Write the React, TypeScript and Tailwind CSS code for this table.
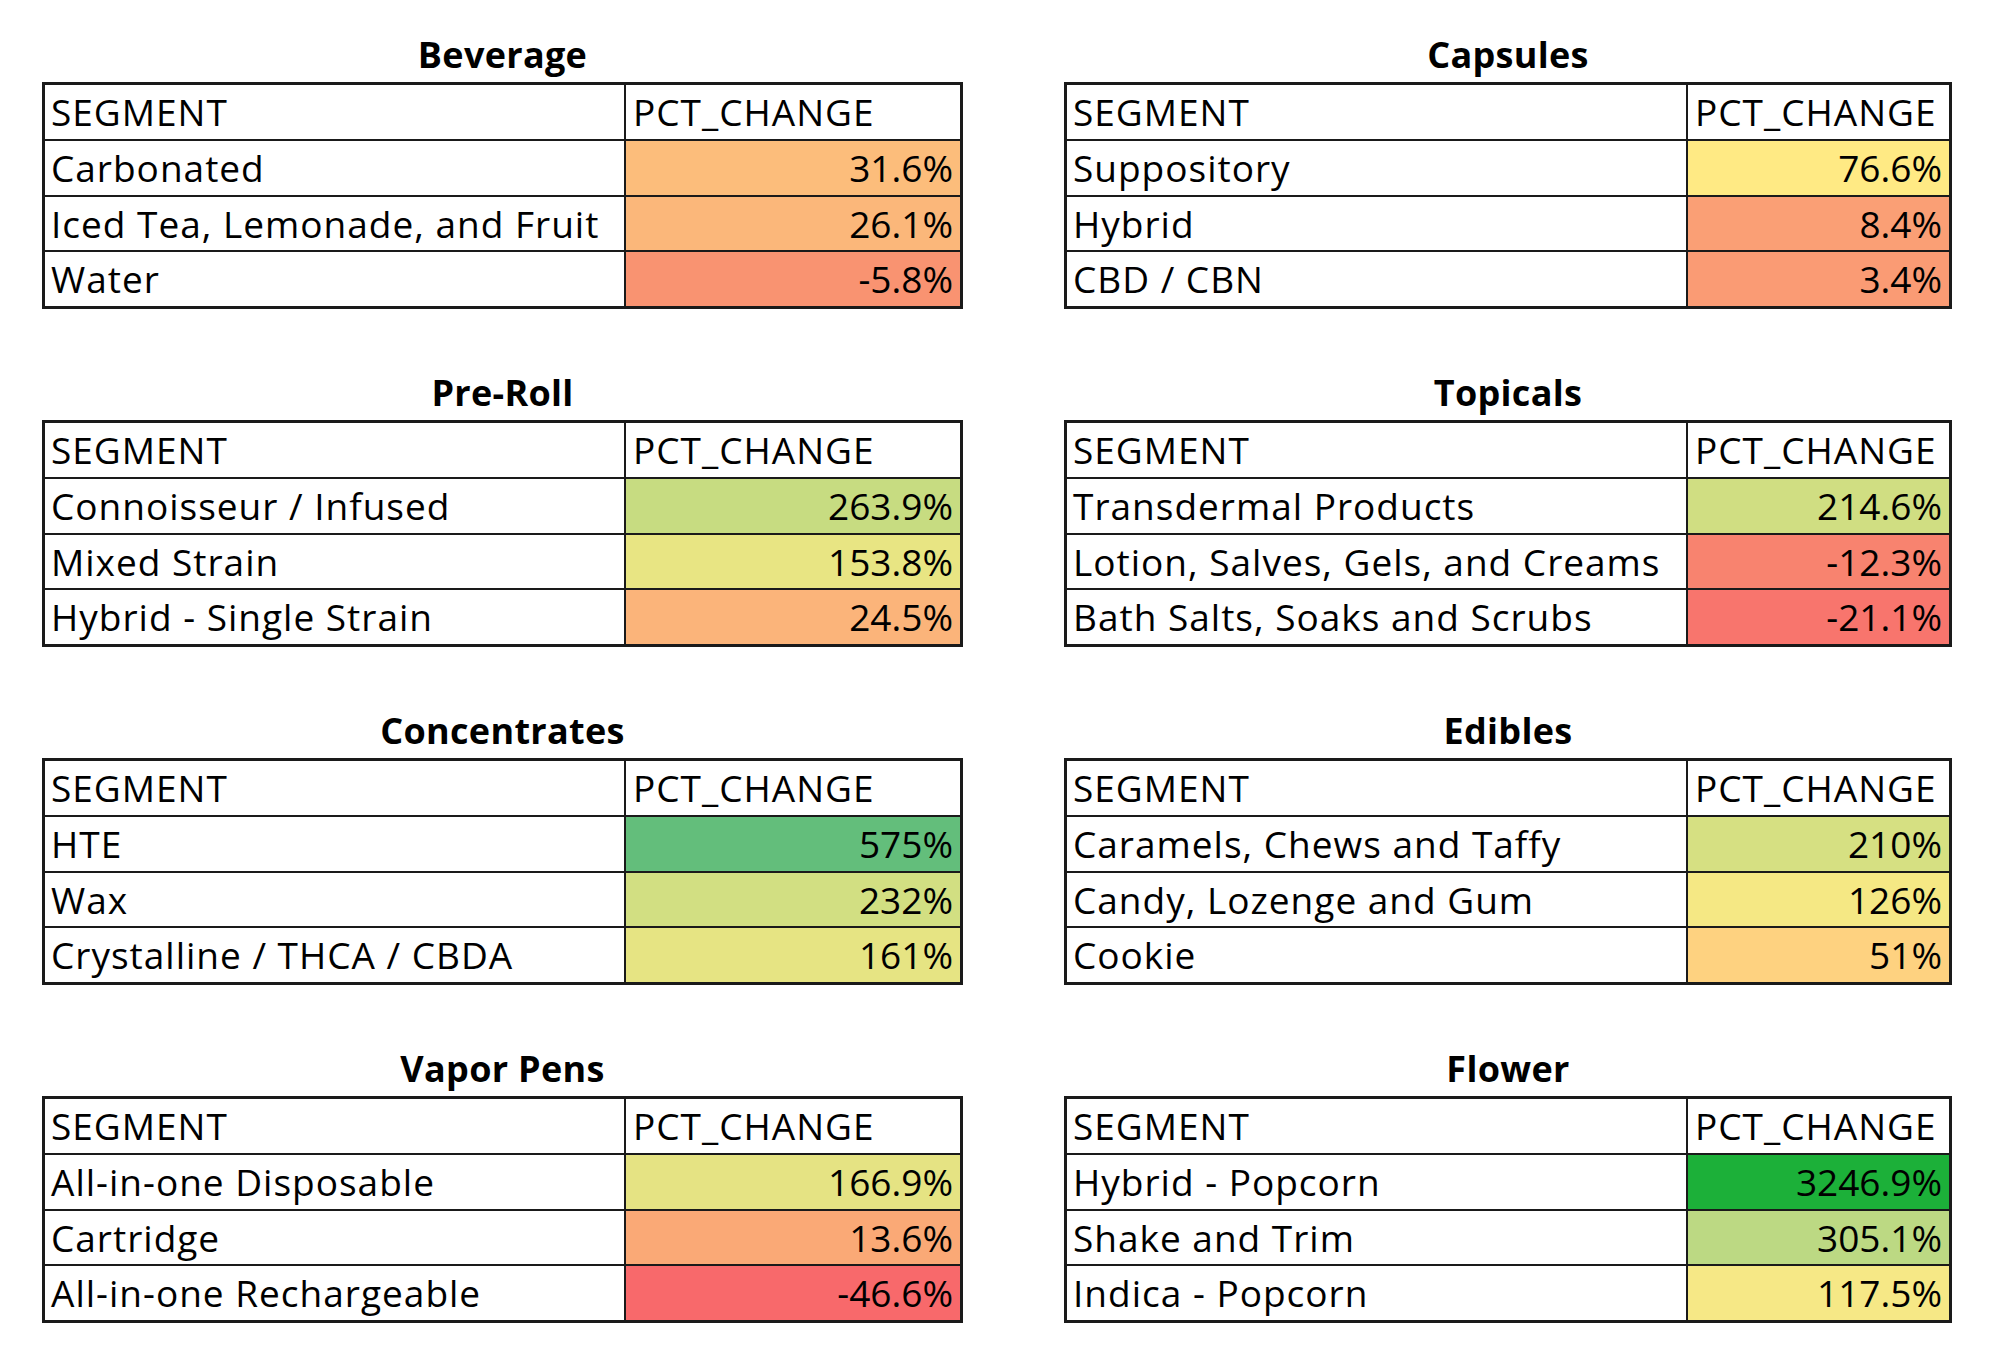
import React from "react";

type Row = { seg: string; pct: string; bg: string };
type Section = { title: string; rows: Row[] };

const sections: Section[] = [
  {
    title: "Beverage",
    rows: [
      { seg: "Carbonated", pct: "31.6%", bg: "#FCBD7B" },
      { seg: "Iced Tea, Lemonade, and Fruit", pct: "26.1%", bg: "#FBB77A" },
      { seg: "Water", pct: "-5.8%", bg: "#F99371" },
    ],
  },
  {
    title: "Capsules",
    rows: [
      { seg: "Suppository", pct: "76.6%", bg: "#FFEA84" },
      { seg: "Hybrid", pct: "8.4%", bg: "#FA9F75" },
      { seg: "CBD / CBN", pct: "3.4%", bg: "#FA9B74" },
    ],
  },
  {
    title: "Pre-Roll",
    rows: [
      { seg: "Connoisseur / Infused", pct: "263.9%", bg: "#C7DC81" },
      { seg: "Mixed Strain", pct: "153.8%", bg: "#E8E583" },
      { seg: "Hybrid - Single Strain", pct: "24.5%", bg: "#FBB47A" },
    ],
  },
  {
    title: "Topicals",
    rows: [
      { seg: "Transdermal Products", pct: "214.6%", bg: "#D0DE82" },
      { seg: "Lotion, Salves, Gels, and Creams", pct: "-12.3%", bg: "#F8836F" },
      { seg: "Bath Salts, Soaks and Scrubs", pct: "-21.1%", bg: "#F8756D" },
    ],
  },
  {
    title: "Concentrates",
    rows: [
      { seg: "HTE", pct: "575%", bg: "#63BE7B" },
      { seg: "Wax", pct: "232%", bg: "#D2DF82" },
      { seg: "Crystalline / THCA / CBDA", pct: "161%", bg: "#E6E483" },
    ],
  },
  {
    title: "Edibles",
    rows: [
      { seg: "Caramels, Chews and Taffy", pct: "210%", bg: "#D6E082" },
      { seg: "Candy, Lozenge and Gum", pct: "126%", bg: "#F5E884" },
      { seg: "Cookie", pct: "51%", bg: "#FED280" },
    ],
  },
  {
    title: "Vapor Pens",
    rows: [
      { seg: "All-in-one Disposable", pct: "166.9%", bg: "#E5E383" },
      { seg: "Cartridge", pct: "13.6%", bg: "#FAA976" },
      { seg: "All-in-one Rechargeable", pct: "-46.6%", bg: "#F8696B" },
    ],
  },
  {
    title: "Flower",
    rows: [
      { seg: "Hybrid - Popcorn", pct: "3246.9%", bg: "#1CB039" },
      { seg: "Shake and Trim", pct: "305.1%", bg: "#BCD983" },
      { seg: "Indica - Popcorn", pct: "117.5%", bg: "#F6E886" },
    ],
  },
];

function Table({ s, left }: { s: Section; left: boolean }) {
  const segW = left ? "w-[581px]" : "w-[621px]";
  return (
    <div className="flex flex-col">
      <div className="h-[55px] text-center font-bold leading-[55px] text-[36px] tracking-[0.3px] text-black">
        {s.title}
      </div>
      <div className="flex flex-col border-[3px] border-[#1a1a1a]">
        <div className="flex h-[54px]">
          <div className={`${segW} flex items-center border-r-2 border-[#1a1a1a] bg-white pl-[6px]`}>
            SEGMENT
          </div>
          <div className="flex flex-1 items-center bg-white pl-[7px]">PCT_CHANGE</div>
        </div>
        {s.rows.map((r) => (
          <div key={r.seg} className="flex h-[55.5px] border-t-2 border-[#1a1a1a]">
            <div className={`${segW} flex items-center border-r-2 border-[#1a1a1a] bg-white pl-[6px]`}>
              {r.seg}
            </div>
            <div
              className="flex flex-1 items-center justify-end pr-[7px] tracking-[0px]"
              style={{ backgroundColor: r.bg }}
            >
              {r.pct}
            </div>
          </div>
        ))}
      </div>
    </div>
  );
}

export default function App() {
  return (
    <div
      className="h-[1353px] w-[2000px] overflow-hidden bg-white pl-[42px] pt-[27px] text-[37px] tracking-[1px] text-black"
      style={{ fontFamily: "'Open Sans', Lato, sans-serif" }}
    >
      <div className="grid grid-cols-[921px_888px] gap-x-[101px] gap-y-[56.5px]">
        {sections.map((s, i) => (
          <Table key={s.title} s={s} left={i % 2 === 0} />
        ))}
      </div>
    </div>
  );
}
